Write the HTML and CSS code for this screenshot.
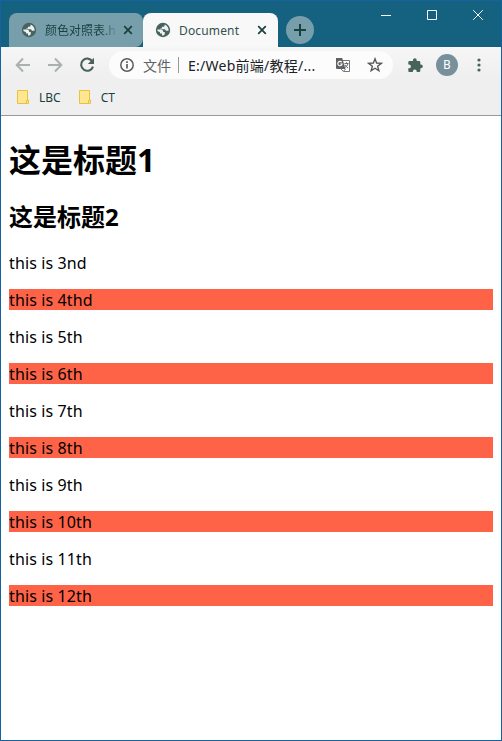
FILE: index.html
```html
<!DOCTYPE html>
<html lang="zh">
<head>
<meta charset="utf-8">
<title>Document</title>
<link rel="stylesheet" href="styles.css">
</head>
<body>
<svg class="defs" aria-hidden="true">
  <symbol id="globe" viewBox="0 0 16 16">
    <circle cx="8" cy="8" r="7.2" fill="#48635f"/>
    <path class="land" d="M2.3 7.6H5.6C7.6 7.6 8.2 8.6 8.2 9.9H9.8V11.8C9.8 12.6 9.2 13.3 8.2 13.6H7V11.6H5V10.2L2.5 8.9ZM9.6 2.4V3.3C9.6 4.3 8.9 4.8 7.9 4.8H6.9V6.4H5.3V7.2H9.2C10.2 7.2 10.8 7.8 10.8 8.8H13.6C13.9 5.8 12.2 3.4 9.6 2.4Z"/>
  </symbol>
  <symbol id="close" viewBox="0 0 10 10"><path d="M1.2 1.2 8.8 8.8M8.8 1.2 1.2 8.8" fill="none" stroke="#18413f" stroke-width="1.7"/></symbol>
  <symbol id="folder" viewBox="0 0 13 15"><path d="M.5.5H10.5V10H11.5V13.5H.5Z" fill="#ffe792" stroke="#e9c13f"/><path d="M9.5 13V10.5H11" fill="none" stroke="#e9c13f"/></symbol>
</svg>
<div class="window">
  <header class="titlebar">
    <div class="tab tab-back">
      <svg class="globe"><use href="#globe"/></svg>
      <span class="tab-title faded">颜色对照表.h</span>
      <svg class="close"><use href="#close"/></svg>
    </div>
    <div class="tab tab-active">
      <svg class="globe"><use href="#globe"/></svg>
      <span class="tab-title">Document</span>
      <svg class="close"><use href="#close"/></svg>
    </div>
    <div class="new-tab"><svg width="12" height="12" viewBox="0 0 12 12"><path d="M6 0V12M0 6H12" stroke="#18413f" stroke-width="2"/></svg></div>
    <div class="controls">
      <svg width="10" height="10" viewBox="0 0 10 10"><path d="M0 5.5H10"/></svg>
      <svg width="10" height="10" viewBox="0 0 10 10"><path d="M.5.5H9.5V9.5H.5Z"/></svg>
      <svg width="10" height="10" viewBox="0 0 10 10"><path d="M.2.2 9.8 9.8M9.8.2.2 9.8"/></svg>
    </div>
  </header>
  <div class="chrome">
    <div class="toolbar">
      <svg class="nav" viewBox="0 0 16 16"><path d="M15 8H2M8 1.5 1.7 8 8 14.5" fill="none" stroke="#a9b2af" stroke-width="2"/></svg>
      <svg class="nav" viewBox="0 0 16 16"><path d="M1 8H14M8 1.5 14.3 8 8 14.5" fill="none" stroke="#a9b2af" stroke-width="2"/></svg>
      <svg class="nav" viewBox="0 0 16 16"><path d="M13.3 4.3A6.1 6.1 0 1 0 14 9.6" fill="none" stroke="#48635a" stroke-width="2.1"/><path d="M15 .8V7H8.8Z" fill="#48635a"/></svg>
      <div class="address">
        <svg class="info" viewBox="0 0 14 14"><circle cx="7" cy="7" r="6.2" fill="none" stroke="#5b5d60" stroke-width="1.5"/><path d="M7 6.1V10.6M7 3.2V4.9" stroke="#5b5d60" stroke-width="1.7"/></svg>
        <span class="scheme">文件</span>
        <span class="divider"></span>
        <span class="url">E:/Web前端/教程/...</span>
        <svg class="translate" viewBox="0 0 14 14"><path d="M6 2.5H13.5V13.5H7.5L5 11" fill="#fff" stroke="#777"/><path d="M0 0H6.2L9.5 11H1Q0 11 0 10Z" fill="#5f6265"/><path d="M5.8 4.2A2.2 2.2 0 1 0 6.2 6H4.2" fill="none" stroke="#fff" stroke-width="1.1"/><path d="M8.5 5.5H12.5M10.5 4.3V5.5M12 5.8Q11.3 8.2 9 9.4M9.2 6.8Q10.3 9 12 10M7.4 13.3 9.5 11" fill="none" stroke="#66696c"/></svg>
        <svg class="star" viewBox="0 0 14 14"><path d="M7 1.6 8.4 5.3 12.5 5.6 9.3 8.1 10.4 12 7 9.8 3.6 12 4.7 8.1 1.5 5.6 5.6 5.3Z" fill="none" stroke="#55585b" stroke-width="1.2"/></svg>
      </div>
      <svg class="puzzle" viewBox="0 0 15 15"><path d="M1.4 3H5V2.1A1.8 1.8 0 0 1 8.7 2.1V3H11.1Q12.3 3 12.3 4.2V6.6H13A1.8 1.8 0 0 1 13 10.2H12.3V13Q12.3 14 11.1 14H8.7V13.3A1.9 1.9 0 0 0 4.9 13.3V14H1.4Q.3 14 .3 13V10.3H1A1.9 1.9 0 0 0 1 6.5H.3V4.2Q.3 3 1.4 3Z" fill="#48635a"/></svg>
      <span class="avatar">B</span>
      <svg class="menu" viewBox="0 0 4 14"><g fill="#48635a"><circle cx="2" cy="2" r="1.6"/><circle cx="2" cy="7" r="1.6"/><circle cx="2" cy="12" r="1.6"/></g></svg>
    </div>
    <nav class="bookmarks">
      <span class="bookmark"><svg class="folder"><use href="#folder"/></svg>LBC</span>
      <span class="bookmark"><svg class="folder"><use href="#folder"/></svg>CT</span>
    </nav>
  </div>
  <main class="page">
    <h1>这是标题1</h1>
    <h2>这是标题2</h2>
    <p>this is 3nd</p>
    <p>this is 4thd</p>
    <p>this is 5th</p>
    <p>this is 6th</p>
    <p>this is 7th</p>
    <p>this is 8th</p>
    <p>this is 9th</p>
    <p>this is 10th</p>
    <p>this is 11th</p>
    <p>this is 12th</p>
  </main>
</div>
</body>
</html>
```
FILE: styles.css
```css
* { box-sizing: border-box; }
body { margin: 0; font-family: "Noto Sans", "Noto Sans CJK SC", sans-serif; }
svg { display: block; flex: none; }
.defs { position: absolute; width: 0; height: 0; }
.window { height: 741px; border: 1px solid #1661a0; background: #fff; overflow: hidden; }

.titlebar { display: flex; height: 46px; padding: 12px 0 0 8px; background: #14627f; }
.tab { display: flex; align-items: center; width: 134px; height: 34px; padding-left: 12px; font-size: 12px; }
.tab-back { background: #779eab; border-radius: 8px 8px 8px 0; color: #18413f; }
.tab-active { width: 135px; background: #f8f8f8; border-radius: 8px 8px 0 0; color: #34504e; letter-spacing: .15px; }
.globe { width: 16px; height: 16px; }
.tab-back .land { fill: #779eab; }
.land { fill: #eef1f0; }
.globe { color: #eef1f0; }
.tab-title { width: 74px; margin-left: 8px; padding-top: 2px; white-space: nowrap; overflow: hidden; line-height: 20px; }
.faded { background: linear-gradient(90deg, #18413f 75%, #779eab 100%); background-clip: text; -webkit-background-clip: text; color: transparent; }
.close { width: 10px; height: 10px; margin-left: 4px; }
.new-tab { display: grid; place-items: center; width: 28px; height: 28px; margin: 3px 0 0 8px; border-radius: 50%; background: #779eab; }
.controls { display: flex; gap: 36px; margin: -3px 18px 0 auto; }
.controls path { fill: none; stroke: #fff; }

.chrome { height: 69px; background: linear-gradient(#f6f6f6, #efefef 45%); border-bottom: 1px solid #999; }
.toolbar { display: flex; align-items: center; height: 36px; padding-left: 14px; }
.nav { width: 16px; height: 16px; margin-right: 16px; }
.address { display: flex; align-items: center; width: 284px; height: 28px; margin-left: -2px; padding-left: 11px; border-radius: 14px; background: #fcfcfc; font-size: 14px; }
.info { width: 14px; height: 14px; }
.scheme { width: 29px; margin-left: 9px; color: #5f6265; }
.divider { width: 1px; height: 16px; margin: 0 9px 0 6px; background: #999; }
.url { width: 148px; color: #202124; white-space: nowrap; letter-spacing: .25px; }
.scheme, .url { margin-top: -1px; }
.translate { width: 14px; height: 14px; }
.star { width: 16px; height: 16px; margin-left: 17px; }
.puzzle { width: 15px; height: 15px; margin-left: 15px; }
.avatar { width: 22px; height: 22px; margin-left: 13px; border-radius: 50%; background: #78909c; color: #fff; font: 400 12px/22px Roboto, sans-serif; text-align: center; }
.menu { width: 4px; height: 14px; margin-left: 19px; }
.bookmarks { display: flex; gap: 18px; height: 29px; padding-left: 16px; font-size: 12px; color: #18413f; }
.bookmark { display: flex; align-items: center; }
.folder { width: 13px; height: 15px; margin-right: 9px; }

.page { padding: 22px 8px 0; color: #000; }
.page h1 { margin: 0 0 20px; font-size: 32px; line-height: 43px; }
.page h2 { margin: 0 0 20px; font-size: 24px; line-height: 31px; }
.page p { height: 21px; margin: 0 0 16px; font-size: 16px; line-height: 23px; letter-spacing: .12px; }
.page p:nth-of-type(even) { background: #ff6347; }
```
